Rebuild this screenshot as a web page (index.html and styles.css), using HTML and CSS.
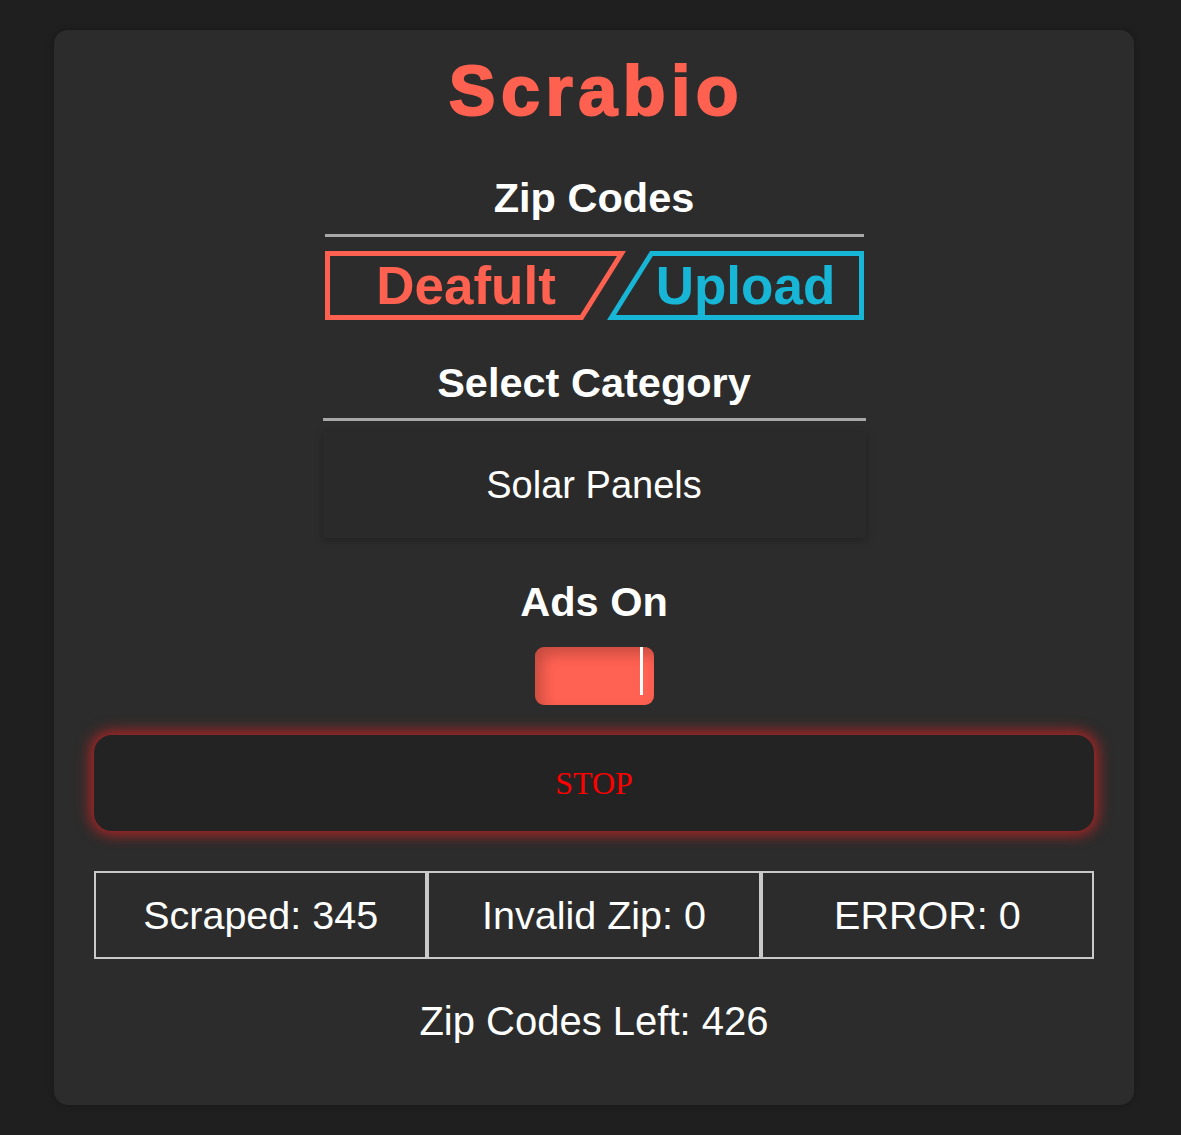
FILE: index.html
```html
<!DOCTYPE html>
<html lang="en">
<head>
<meta charset="utf-8">
<title>Scrabio</title>
<link rel="stylesheet" href="styles.css">
</head>
<body>
<main class="card">
  <h1 class="title">Scrabio</h1>

  <h2 class="section-title zip-title">Zip Codes</h2>
  <div class="rule rule-zip"></div>
  <div class="source-switch">
    <div class="src src-default">
      <svg class="src-frame" width="301" height="69" viewBox="0 0 301 69" aria-hidden="true">
        <polygon points="2.5,2.5 296.5,2.5 256.5,66.5 2.5,66.5" fill="none" stroke="#ff6150" stroke-width="5"/>
      </svg>
      <span class="src-label">Deafult</span>
    </div>
    <div class="src src-upload">
      <svg class="src-frame" width="257" height="69" viewBox="0 0 257 69" aria-hidden="true">
        <polygon points="44.5,2.5 254.5,2.5 254.5,66.5 4.5,66.5" fill="none" stroke="#17b6d6" stroke-width="5"/>
      </svg>
      <span class="src-label">Upload</span>
    </div>
  </div>

  <h2 class="section-title cat-title">Select Category</h2>
  <div class="rule rule-cat"></div>
  <div class="category">Solar Panels</div>

  <h2 class="section-title ads-title">Ads On</h2>
  <div class="toggle"><span class="toggle-mark"></span></div>

  <button class="stop">STOP</button>

  <div class="stats">
    <div class="stat">Scraped: 345</div>
    <div class="stat">Invalid Zip: 0</div>
    <div class="stat">ERROR: 0</div>
  </div>

  <p class="left">Zip Codes Left: 426</p>
</main>
</body>
</html>
```

FILE: styles.css
```css
html, body {
  margin: 0;
  padding: 0;
  background: #1f1f1f;
}

body {
  font-family: "Liberation Sans", Arial, sans-serif;
  color: #ffffff;
  padding: 30px 0 30px 54px;
}

.card {
  box-sizing: border-box;
  width: 1080px;
  padding: 20px 40px 61px;
  background: #2c2c2c;
  border-radius: 14px;
  display: flex;
  flex-direction: column;
  align-items: center;
  box-shadow: 0 0 6px rgba(0, 0, 0, 0.25);
}

.title {
  margin: 0;
  padding-left: 5px;
  font-size: 70px;
  line-height: 83px;
  font-weight: 700;
  letter-spacing: 5.5px;
  color: #ff6150;
  -webkit-text-stroke: 2px #ff6150;
}

.section-title {
  margin: 0;
  font-size: 41.5px;
  line-height: 46px;
  font-weight: 700;
  color: #ffffff;
}

.zip-title { margin-top: 42px; }
.cat-title { margin-top: 40px; }
.ads-title { margin-top: 41px; }

.rule {
  height: 3px;
  background: #a8a8a8;
}

.rule-zip {
  width: 539px;
  margin-top: 13px;
}

.rule-cat {
  width: 543px;
  margin-top: 12px;
}

.source-switch {
  margin-top: 14px;
  display: flex;
  width: 539px;
  height: 69px;
}

.src {
  display: grid;
  height: 69px;
}

.src > * {
  grid-area: 1 / 1;
}

.src-default {
  width: 301px;
}

.src-upload {
  width: 257px;
  margin-left: -19px;
}

.src-frame {
  display: block;
}

.src-label {
  align-self: center;
  justify-self: stretch;
  text-align: center;
  font-size: 53px;
  line-height: 61px;
  font-weight: 700;
}

.src-default .src-label {
  color: #ff6150;
  padding-right: 18px;
}

.src-upload .src-label {
  color: #17b6d6;
  padding-left: 21px;
}

.category {
  box-sizing: border-box;
  width: 543px;
  height: 106px;
  margin-top: 11px;
  background: #2a2a2a;
  box-shadow: 0 2px 8px rgba(0, 0, 0, 0.28);
  display: flex;
  align-items: center;
  justify-content: center;
  font-size: 38px;
  color: #ffffff;
}

.toggle {
  margin-top: 22px;
  width: 119px;
  height: 58px;
  border-radius: 9px;
  background: #ff6152;
  box-shadow: inset 7px 7px 14px rgba(0, 0, 0, 0.22);
  display: flex;
  justify-content: flex-end;
  align-items: flex-start;
}

.toggle-mark {
  width: 3px;
  height: 48px;
  margin-right: 11px;
  background: #ffffff;
}

.stop {
  box-sizing: border-box;
  margin-top: 30px;
  width: 1000px;
  height: 96px;
  border: none;
  border-radius: 18px;
  background: #232323;
  box-shadow: 0 0 14px 4px rgba(195, 35, 35, 0.85);
  color: #ff0000;
  font-family: "Liberation Serif", "Times New Roman", serif;
  font-size: 32px;
  padding: 0;
}

.stats {
  margin-top: 40px;
  width: 1000px;
  display: grid;
  grid-template-columns: 1fr 1fr 1fr;
}

.stat {
  box-sizing: border-box;
  height: 88px;
  border: 2px solid #c9c9c9;
  display: flex;
  align-items: center;
  justify-content: center;
  font-size: 39.5px;
  color: #ffffff;
}

.left {
  margin: 39px 0 0;
  font-size: 40px;
  line-height: 46px;
  color: #ffffff;
}
```
